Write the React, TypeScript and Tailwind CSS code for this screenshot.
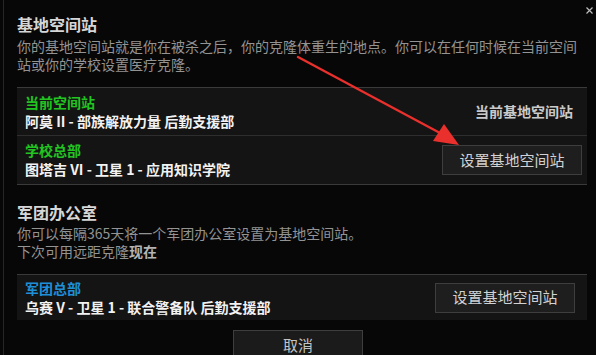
import React from "react";

const font = { fontFamily: '"Noto Sans CJK SC", "Noto Sans", sans-serif' };

const StationRow = ({
  label,
  labelColor,
  value,
  right,
  divider,
}: {
  label: string;
  labelColor: string;
  value: string;
  right: React.ReactNode;
  divider?: boolean;
}) => (
  <div
    className={`flex h-[48px] items-center justify-between pl-2 ${
      divider ? "border-b border-[#2e2e2e]" : ""
    }`}
  >
    <div className="flex flex-col">
      <span className={`text-[14px] font-bold leading-[19px] ${labelColor}`}>{label}</span>
      <span className="text-[14px] font-bold leading-[19px] text-[#f2f2f2]">{value}</span>
    </div>
    {right}
  </div>
);

const SetButton = ({ className }: { className?: string }) => (
  <button
    className={`h-[30px] w-[140px] border border-[#3e3e3e] bg-[#1e1e1e] text-[15px] text-[#d2d2d2] ${className ?? ""}`}
  >
    设置基地空间站
  </button>
);

export default function App() {
  return (
    <div className="relative h-[355px] w-[596px] overflow-hidden bg-[#070707]" style={font}>
      <div className="h-full pl-[3px]">
        <div className="h-full border-l border-[#262626] pl-[13px] pr-[9px] pt-[14px]">
          {/* base station */}
          <h2 className="text-[16px] font-bold leading-[20px] text-[#d6d6d6]">基地空间站</h2>
          <p className="mt-[3px] text-[14px] leading-[18px] text-[#939393]">
            你的基地空间站就是你在被杀之后，你的克隆体重生的地点。你可以在任何时候在当前空间站或你的学校设置医疗克隆。
          </p>

          <div className="mt-[14px] border-t border-[#3a3a3a] border-b bg-[#141414]">
            <StationRow
              label="当前空间站"
              labelColor="text-[#22c422]"
              value="阿莫 II - 部族解放力量 后勤支援部"
              divider
              right={
                <span className="pr-[14px] text-[14px] font-bold text-[#cacaca]">当前基地空间站</span>
              }
            />
            <StationRow
              label="学校总部"
              labelColor="text-[#22c422]"
              value="图塔吉 VI - 卫星 1 - 应用知识学院"
              right={<SetButton className="mr-[5px]" />}
            />
          </div>

          {/* corp office */}
          <h2 className="mt-[17px] text-[16px] font-bold leading-[20px] text-[#d6d6d6]">军团办公室</h2>
          <div className="mt-[2px] flex flex-col text-[14px] leading-[18px] text-[#939393]">
            <span>你可以每隔365天将一个军团办公室设置为基地空间站。</span>
            <span>
              下次可用远距克隆<b className="font-bold text-[#b4b4b4]">现在</b>
            </span>
          </div>

          <div className="mt-[14px] flex h-[46px] items-center justify-between border-t border-[#3a3a3a] bg-[#141414] pl-2">
            <div className="flex flex-col">
              <span className="text-[14px] font-bold leading-[19px] text-[#1e8fd6]">军团总部</span>
              <span className="text-[14px] font-bold leading-[19px] text-[#f2f2f2]">
                乌赛 V - 卫星 1 - 联合警备队 后勤支援部
              </span>
            </div>
            <SetButton className="mr-[12px]" />
          </div>

          <div className="mt-[10px] flex justify-center pr-[8px]">
            <button className="h-[30px] w-[130px] border border-[#3e3e3e] bg-[#1b1b1b] text-[15px] text-[#c4c4c4]">
              取消
            </button>
          </div>
        </div>
      </div>

      {/* close */}
      <button className="absolute right-[3px] top-[7px] p-0">
        <svg width="7" height="7" viewBox="0 0 7 7">
          <path d="M0.5 0.5 L6.5 6.5 M6.5 0.5 L0.5 6.5" stroke="#bdbdbd" strokeWidth="1.2" />
        </svg>
      </button>

      {/* red annotation arrow */}
      <svg className="pointer-events-none absolute left-0 top-0" width="596" height="355">
        <path d="M298 57 L440 133" stroke="#ea302c" strokeWidth="2.4" strokeLinecap="round" />
        <polygon points="459,145 433,141 444,124" fill="#ea302c" />
      </svg>
    </div>
  );
}
